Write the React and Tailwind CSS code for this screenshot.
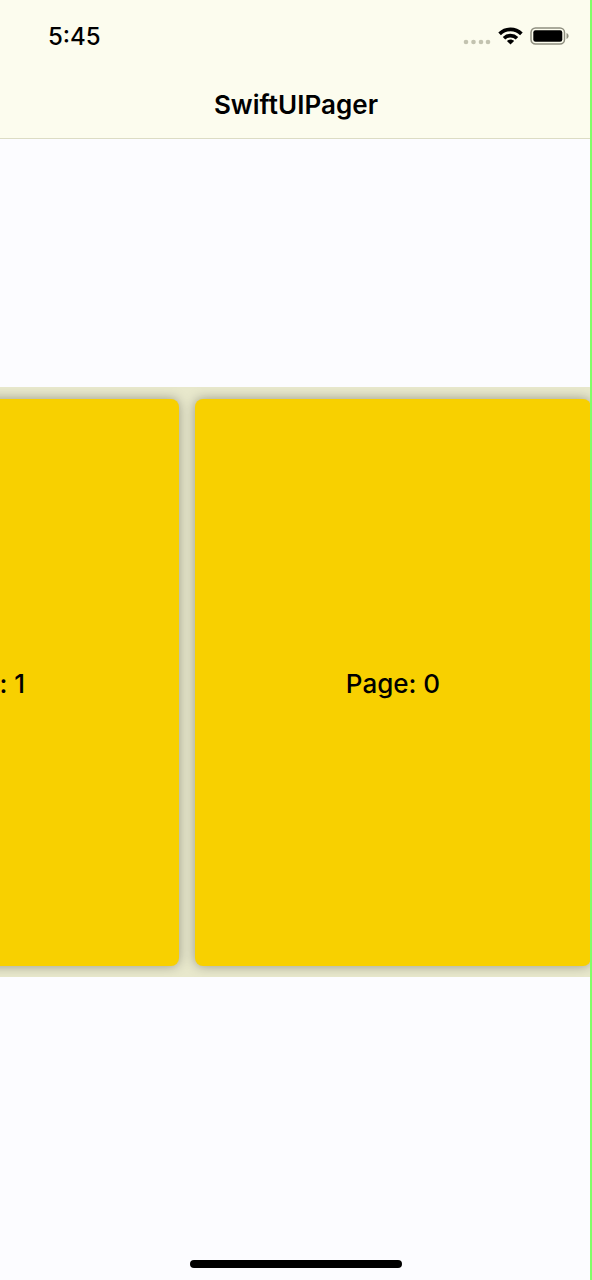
const PAGES = [1, 0];

function StatusBar() {
  return (
    <div className="flex h-[72px] items-center justify-between pl-12 pr-[22px]">
      <span className="pt-[2px] text-[24px] font-medium leading-none">5:45</span>
      <div className="flex items-center">
        <svg className="mr-[7px] mt-[12px]" width="29" height="6" viewBox="0 0 29 6" fill="#c3c3b0">
          <circle cx="4" cy="3" r="2.3" />
          <circle cx="11.5" cy="3" r="2.3" />
          <circle cx="19" cy="3" r="2.3" />
          <circle cx="26" cy="3" r="2.3" />
        </svg>
        <svg className="mr-[7px]" width="25" height="18" viewBox="0 0 25 18" fill="none" stroke="#000">
          <path d="M1.6 6.9C7.7.9 17.3.9 23.4 6.9" strokeWidth="3.7" />
          <path d="M6 11.2c3.7-3.5 9.3-3.5 13 0" strokeWidth="3.6" />
          <path d="M8.9 14c2-2 5.200-2 7.200 0l-3.600 3.600z" fill="#000" stroke="none" />
        </svg>
        <svg width="40" height="18" viewBox="0 0 40 18">
          <rect x="1" y="1" width="33.500" height="16" rx="4.500" fill="none" stroke="#8f8f80" strokeWidth="1.500" />
          <rect x="3.300" y="3.300" width="29" height="11.500" rx="2.200" fill="#000" />
          <path d="M36.500 6v6c1.300-.6 2.100-1.600 2.100-3s-.8-2.400-2.100-3z" fill="#8f8f80" />
        </svg>
      </div>
    </div>
  );
}

function PageCard({ index }) {
  return (
    <div className="flex h-[567px] w-[396px] shrink-0 items-center justify-center rounded-[8px] bg-[#f8d000] pt-[3px] text-[26px] font-medium leading-none shadow-[0_0_12px_rgba(0,0,0,0.34)]">
      Page: {index}
    </div>
  );
}

export default function App() {
  return (
    <div className="relative flex h-[1280px] w-[592px] flex-col overflow-hidden bg-[#fcfcff] font-['Inter',sans-serif] text-black">
      <header className="h-[139px] shrink-0 border-b border-[#dcdcc4] bg-[#fcfcee]">
        <StatusBar />
        <h1 className="flex h-[66px] items-center justify-center text-[26px] font-semibold leading-none tracking-[0.05px]">SwiftUIPager</h1>
      </header>

      <main className="mt-[248px] flex h-[590px] shrink-0 overflow-hidden bg-[#e8e8cc] pt-[12px]">
        <div className="-ml-[217px] flex shrink-0 gap-4">
          {PAGES.map((page) => (
            <PageCard key={page} index={page} />
          ))}
        </div>
      </main>

      <footer className="mt-auto flex h-5 justify-center">
        <div className="h-[8px] w-[212px] rounded-full bg-black" />
      </footer>

      <div className="absolute inset-y-0 right-0 w-[2px] bg-[#80ff66]" />
    </div>
  );
}
